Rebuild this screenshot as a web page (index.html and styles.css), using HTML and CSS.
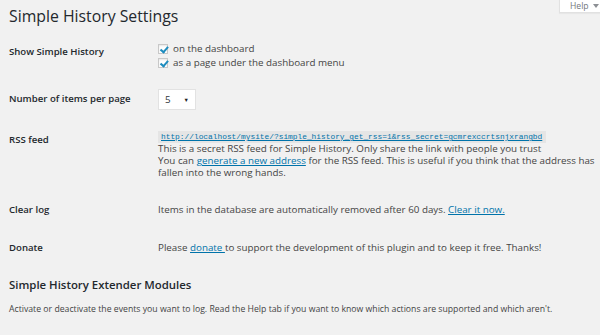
FILE: index.html
```html
<!DOCTYPE html>
<html lang="en">
<head>
    <meta charset="UTF-8">
    <title>Simple History Settings</title>
    <link rel="stylesheet" href="styles.css">
</head>
<body>
    <div class="help-tab"><span>Help</span><svg class="caret" width="6" height="4" viewBox="0 0 6 4"><path d="M0 0h6L3 4z" fill="#8c8f94"/></svg></div>
    <section class="wrap">
        <h1 class="page-title">Simple History Settings</h1>

        <div class="form-table">
            <div class="row">
                <div class="label">Show Simple History</div>
                <div class="field">
                    <label class="check"><span class="box checked"></span>on the dashboard</label>
                    <label class="check"><span class="box checked"></span>as a page under the dashboard menu</label>
                </div>
            </div>

            <div class="row row-select">
                <div class="label">Number of items per page</div>
                <div class="field">
                    <div class="select">5 <span class="arrow">&#9660;</span></div>
                </div>
            </div>

            <div class="row row-rss">
                <div class="label">RSS feed</div>
                <div class="field">
                    <code class="feed"><a href="#">http://localhost/mysite/?simple_history_get_rss=1&amp;rss_secret=gcmrexccrtsnjxrangbd</a></code>
                    <div>This is a secret RSS feed for Simple History. Only share the link with people you trust</div>
                    <div>You can <a href="#">generate a new address</a> for the RSS feed. This is useful if you think that the address has fallen into the wrong hands.</div>
                </div>
            </div>

            <div class="row row-text">
                <div class="label">Clear log</div>
                <div class="field">
                    <p>Items in the database are automatically removed after 60 days. <a href="#">Clear it now.</a></p>
                </div>
            </div>

            <div class="row row-text">
                <div class="label">Donate</div>
                <div class="field">
                    <p>Please <a href="#">donate </a>to support the development of this plugin and to keep it free. Thanks!</p>
                </div>
            </div>
        </div>

        <h2 class="section-title">Simple History Extender Modules</h2>
        <p class="section-desc">Activate or deactivate the events you want to log. Read the Help tab if you want to know which actions are supported and which aren't.</p>
    </section>
</body>
</html>
```

FILE: styles.css
```css
* {
    box-sizing: border-box;
}

html, body {
    margin: 0;
    height: 100%;
}

body {
    background: #f1f1f1;
    font-family: 'Open Sans', sans-serif;
    font-size: 9.8px;
    color: #444;
    overflow: hidden;
}

a {
    color: #0073aa;
}

.wrap {
    padding: 0 0 0 9px;
}

.page-title {
    margin: 0 0 5px;
    padding-top: 4px;
    font-size: 15.8px;
    line-height: 24px;
    font-weight: 400;
    color: #23282d;
}

.help-tab {
    position: absolute;
    top: -1px;
    left: 559px;
    width: 41px;
    height: 14px;
    padding: 0 0 0 10px;
    display: flex;
    align-items: center;
    white-space: nowrap;
    background: #fff;
    border: 1px solid #e1e1e1;
    border-right: 0;
    box-shadow: 0 1px 1px rgba(0, 0, 0, .04);
    font-size: 8.6px;
    color: #72777c;
}

.help-tab .caret {
    flex: none;
    display: block;
    margin-left: 4px;
}

.row {
    display: flex;
    padding: 9px 0;
}

.row .label {
    width: 149px;
    flex: none;
    padding-top: 3px;
    line-height: 14px;
    font-weight: 600;
    font-size: 9.6px;
    color: #23282d;
}

.field {
    line-height: 12px;
}

.check {
    display: flex;
    align-items: center;
    height: 14px;
}

.box {
    width: 10px;
    height: 10px;
    margin-right: 5px;
    background: #fff;
    border: 1px solid #c8c8c8;
    box-shadow: inset 0 1px 2px rgba(0, 0, 0, .1);
    position: relative;
}

.box.checked::after {
    content: "";
    position: absolute;
    left: 2.5px;
    top: 0;
    width: 3px;
    height: 5.5px;
    border: solid #1e8cbe;
    border-width: 0 2px 2px 0;
    transform: rotate(40deg);
}

.row-select .label {
    padding-top: 4px;
}

.select {
    width: 38px;
    height: 21px;
    margin: 1px 0 3px;
    padding: 0 6px;
    display: flex;
    align-items: center;
    justify-content: space-between;
    background: #fff;
    border: 1px solid #e2e2e2;
    color: #32373c;
}

.select .arrow {
    font-size: 5.5px;
    color: #222;
}

.row-rss .label {
    padding-top: 2px;
}

.feed {
    display: block;
    width: 388px;
    height: 12px;
    padding: 0 3px;
    background: #e5e5e5;
    font-family: 'Liberation Mono', monospace;
    font-size: 7.85px;
    line-height: 12px;
}

.row-text p {
    margin: 7px 0 1px;
}

.row-text .label {
    padding-top: 6px;
}

.section-title {
    margin: 13px 0 10px;
    font-size: 11.4px;
    line-height: 16px;
    font-weight: 600;
    color: #23282d;
}

.section-desc {
    margin: 0;
    font-size: 8.7px;
    line-height: 12px;
}
```
